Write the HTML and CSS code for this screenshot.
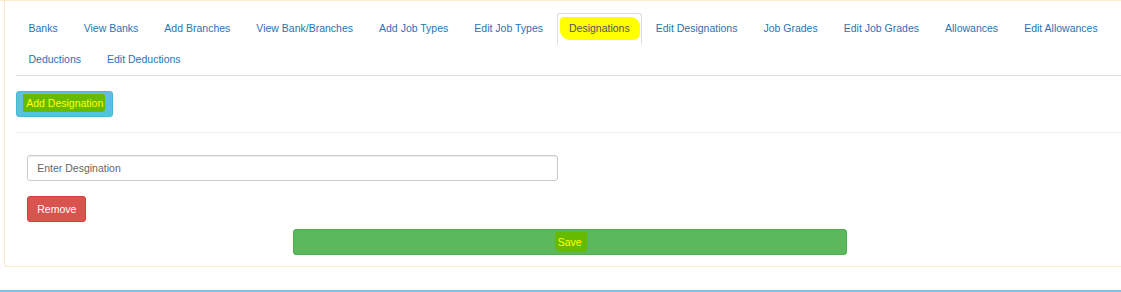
FILE: index.html
```html
<!DOCTYPE html>
<html>
<head>
<meta charset="utf-8">
<link rel="stylesheet" href="styles.css">
</head>
<body>
<div class="page">
  <div class="top-rule"></div>
  <div class="panel">
    <div class="panel-body">
      <ul class="tabs">
        <li><a>Banks</a></li>
        <li><a>View Banks</a></li>
        <li><a>Add Branches</a></li>
        <li><a>View Bank/Branches</a></li>
        <li><a>Add Job Types</a></li>
        <li><a>Edit Job Types</a></li>
        <li class="active"><a><span class="mark-yellow">Designations</span></a></li>
        <li><a>Edit Designations</a></li>
        <li><a>Job Grades</a></li>
        <li><a>Edit Job Grades</a></li>
        <li><a>Allowances</a></li>
        <li><a>Edit Allowances</a></li>
        <li><a>Deductions</a></li>
        <li><a>Edit Deductions</a></li>
      </ul>
      <div class="tab-content">
        <button class="btn btn-info add-btn"><span class="mark-green mark-add">Add Designation</span></button>
        <hr class="divider">
        <div class="form-area">
          <input class="form-control" type="text" placeholder="Enter Desgination">
          <button class="btn btn-danger remove-btn">Remove</button>
        </div>
        <button class="btn btn-success save-btn"><span class="mark-green mark-save">Save</span></button>
      </div>
    </div>
  </div>
  <div class="blue-rule"></div>
</div>
</body>
</html>
```
FILE: styles.css
```css
html, body {
  margin: 0;
  padding: 0;
  overflow: hidden;
  background: #fff;
}

body {
  font-family: "Liberation Sans", Arial, sans-serif;
  font-size: 10.5px;
  line-height: 15px;
  color: #333;
}

.page {
  width: 1121px;
}

.top-rule {
  height: 1px;
  background: #faebcc;
}

.panel {
  margin-left: 4px;
  width: 1150px;
  border: 1px solid #faebcc;
  border-top: none;
  border-radius: 0 0 3px 3px;
  background: #fff;
}

.panel-body {
  padding: 11.5px 11.25px 11px;
}

.tabs {
  list-style: none;
  margin: 0;
  padding: 0;
  display: flex;
  flex-wrap: wrap;
  border-bottom: 1px solid #ddd;
}

.tabs li {
  margin-bottom: -1px;
}

.tabs a {
  display: block;
  margin-right: 1.5px;
  padding: 7.5px 11.25px;
  border: 1px solid transparent;
  border-radius: 3px 3px 0 0;
  color: #2a72b3;
  line-height: 15px;
  white-space: nowrap;
}

.tabs li.active a {
  color: #555;
  background: #fff;
  border-color: #ddd;
  border-bottom-color: transparent;
}

.mark-yellow {
  background: #ffff00;
  padding: 5px 10px 6px 9px;
  margin: -5px -10px -6px -9px;
  border-radius: 4px 9px 7px 10px;
}

.mark-green {
  background: #66bb00;
  color: #ffff00;
  padding: 2px 2px;
  margin: -2px -2px;
  border-radius: 2px;
}

.mark-add {
  padding: 3px 2px 3px 3px;
  margin: -3px -2px -3px -3px;
  border-radius: 1px 2px 3px 1px;
}

.mark-save {
  padding: 4px 5px 4px 3px;
  margin: -4px -5px -4px -3px;
  border-radius: 1px 0 4px 6px;
}

.btn {
  display: block;
  font-family: inherit;
  font-size: 10.5px;
  line-height: 15px;
  padding: 4.5px 9px;
  border: 1px solid transparent;
  border-radius: 3px;
  color: #fff;
  cursor: pointer;
}

.btn-info {
  background: #5bc0de;
  border-color: #46b8da;
}

.btn-danger {
  background: #d9534f;
  border-color: #d43f3a;
}

.btn-success {
  background: #5cb85c;
  border-color: #4cae4c;
}

.add-btn {
  margin-top: 15px;
}

.divider {
  margin: 15px 0;
  border: 0;
  border-top: 1px solid #eee;
  height: 0;
}

.form-area {
  padding: 7.5px 0 0 11px;
}

.form-control {
  display: block;
  box-sizing: border-box;
  width: 530.5px;
  height: 26px;
  padding: 4.5px 9px;
  font-family: inherit;
  font-size: 10.5px;
  line-height: 15px;
  color: #555;
  background: #fff;
  border: 1px solid #ccc;
  border-radius: 3px;
  box-shadow: inset 0 1px 1px rgba(0, 0, 0, .075);
}

.form-control::placeholder {
  color: #666;
}

.remove-btn {
  margin-top: 15px;
}

.save-btn {
  margin-top: 7px;
  margin-left: 276.75px;
  width: 553.5px;
  text-align: center;
}

.blue-rule {
  margin-top: 23px;
  height: 2px;
  background: #7cc2e7;
}
```
